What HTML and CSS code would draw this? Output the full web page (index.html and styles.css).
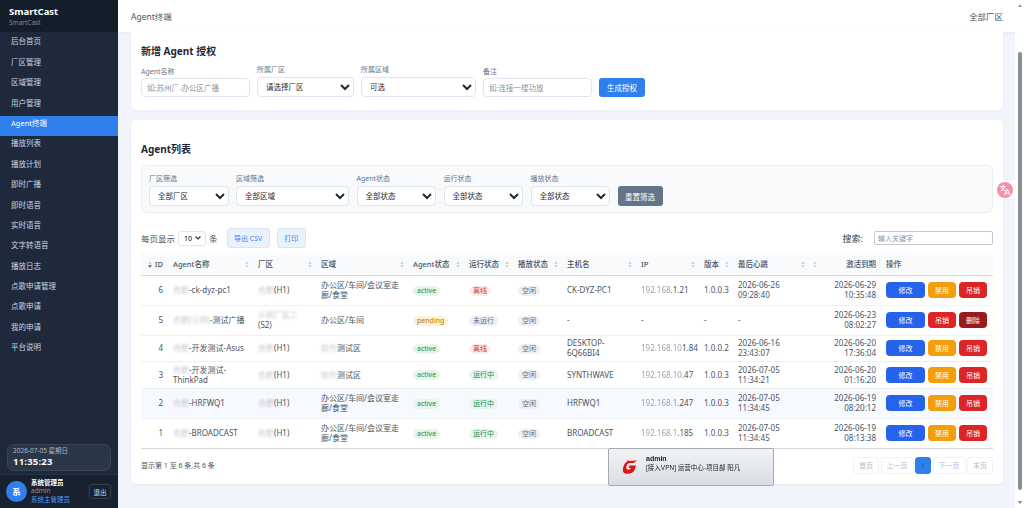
FILE: index.html
```html
<!DOCTYPE html>
<html lang="zh-CN">
<head>
    <meta charset="UTF-8">
    <title>Agent终端</title>
    <link rel="stylesheet" href="styles.css">
</head>
<body>
<div class="app">
    <aside class="sidebar">
        <div class="brand">
            <div class="brand-name">SmartCast</div>
            <div class="brand-sub">SmartCast</div>
        </div>
        <nav class="nav">
            <a class="nav-item">后台首页</a>
            <a class="nav-item">厂区管理</a>
            <a class="nav-item">区域管理</a>
            <a class="nav-item">用户管理</a>
            <a class="nav-item active">Agent终端</a>
            <a class="nav-item">播放列表</a>
            <a class="nav-item">播放计划</a>
            <a class="nav-item">即时广播</a>
            <a class="nav-item">即时语音</a>
            <a class="nav-item">实时语音</a>
            <a class="nav-item">文字转语音</a>
            <a class="nav-item">播放日志</a>
            <a class="nav-item">点歌申请管理</a>
            <a class="nav-item">点歌申请</a>
            <a class="nav-item">我的申请</a>
            <a class="nav-item">平台说明</a>
        </nav>
        <div class="clock">
            <div class="clock-date">2026-07-05 星期日</div>
            <div class="clock-time">11:35:23</div>
        </div>
        <div class="user">
            <div class="avatar">系</div>
            <div class="user-info">
                <div class="user-name">系统管理员</div>
                <div class="user-login">admin</div>
                <div class="user-role">系统主管理员</div>
            </div>
            <button class="logout">退出</button>
        </div>
    </aside>

    <main class="main">
        <header class="topbar">
            <span>Agent终端</span>
            <span>全部厂区</span>
        </header>
        <div class="content">
            <section class="card card-form">
                <h3>新增 Agent 授权</h3>
                <div class="form-row">
                    <label class="field w-name"><span>Agent名称</span><input placeholder="如:苏州厂-办公区广播"></label>
                    <label class="field field-select w-factory"><span>所属厂区</span><select><option>请选择厂区</option></select></label>
                    <label class="field field-select w-area"><span>所属区域</span><select><option>可选</option></select></label>
                    <label class="field w-name"><span>备注</span><input placeholder="如:连接一楼功放"></label>
                    <button class="btn-primary">生成授权</button>
                </div>
            </section>

            <section class="card card-list">
                <h3>Agent列表</h3>
                <div class="filters">
                    <label class="field field-select w-f1"><span>厂区筛选</span><select><option>全部厂区</option></select></label>
                    <label class="field field-select w-f2"><span>区域筛选</span><select><option>全部区域</option></select></label>
                    <label class="field field-select w-f1"><span>Agent状态</span><select><option>全部状态</option></select></label>
                    <label class="field field-select w-f1"><span>运行状态</span><select><option>全部状态</option></select></label>
                    <label class="field field-select w-f1"><span>播放状态</span><select><option>全部状态</option></select></label>
                    <button class="btn-reset">重置筛选</button>
                </div>

                <div class="toolbar">
                    <span>每页显示</span>
                    <select class="page-size"><option>10</option></select>
                    <span class="toolbar-unit">条</span>
                    <button class="btn-light">导出 CSV</button>
                    <button class="btn-light">打印</button>
                    <span class="search-label">搜索:</span>
                    <input class="search" placeholder="输入关键字">
                </div>

                <table class="agents">
                    <colgroup>
                        <col class="c-id"><col class="c-name"><col class="c-factory"><col class="c-area"><col class="c-agent">
                        <col class="c-run"><col class="c-play"><col class="c-host"><col class="c-ip"><col class="c-ver">
                        <col class="c-beat"><col class="c-exp"><col class="c-ops">
                    </colgroup>
                    <thead>
                        <tr>
                            <th class="num sorted">ID</th>
                            <th class="sort">Agent名称</th>
                            <th class="sort">厂区</th>
                            <th class="sort">区域</th>
                            <th class="sort">Agent状态</th>
                            <th class="sort">运行状态</th>
                            <th class="sort">播放状态</th>
                            <th class="sort">主机名</th>
                            <th class="sort">IP</th>
                            <th class="sort">版本</th>
                            <th class="sort">最后心跳</th>
                            <th class="num sort-left">激活到期</th>
                            <th>操作</th>
                        </tr>
                    </thead>
                    <tbody>
                        <tr class="tall">
                            <td class="num">6</td>
                            <td><span class="smudge">合肥</span>-ck-dyz-pc1</td>
                            <td><span class="smudge">合肥</span>(H1)</td>
                            <td>办公区/车间/会议室走廊/食堂</td>
                            <td><span class="badge green">active</span></td>
                            <td><span class="badge red">离线</span></td>
                            <td><span class="badge gray">空闲</span></td>
                            <td>CK-DYZ-PC1</td>
                            <td><span class="smudge-ip">192.168</span>.1.21</td>
                            <td>1.0.0.3</td>
                            <td>2026-06-26 09:28:40</td>
                            <td class="num">2026-06-29 10:35:48</td>
                            <td class="ops"><button class="op blue">修改</button><button class="op orange">禁用</button><button class="op crimson">吊销</button></td>
                        </tr>
                        <tr class="tall">
                            <td class="num">5</td>
                            <td><span class="smudge">合肥(示例)</span>-测试广播</td>
                            <td><span class="smudge">示例厂区二</span>(S2)</td>
                            <td>办公区/车间</td>
                            <td><span class="badge amber">pending</span></td>
                            <td><span class="badge gray">未运行</span></td>
                            <td><span class="badge gray">空闲</span></td>
                            <td>-</td>
                            <td>-</td>
                            <td>-</td>
                            <td>-</td>
                            <td class="num">2026-06-23 08:02:27</td>
                            <td class="ops"><button class="op blue">修改</button><button class="op crimson">吊销</button><button class="op maroon">删除</button></td>
                        </tr>
                        <tr class="short">
                            <td class="num">4</td>
                            <td><span class="smudge">合肥</span>-开发测试-Asus</td>
                            <td><span class="smudge">合肥</span>(H1)</td>
                            <td><span class="smudge">软件</span>测试区</td>
                            <td><span class="badge green">active</span></td>
                            <td><span class="badge red">离线</span></td>
                            <td><span class="badge gray">空闲</span></td>
                            <td>DESKTOP-6Q66BI4</td>
                            <td><span class="smudge-ip">192.168.10</span>1.84</td>
                            <td>1.0.0.2</td>
                            <td>2026-06-16 23:43:07</td>
                            <td class="num">2026-06-20 17:36:04</td>
                            <td class="ops"><button class="op blue">修改</button><button class="op orange">禁用</button><button class="op crimson">吊销</button></td>
                        </tr>
                        <tr class="short">
                            <td class="num">3</td>
                            <td><span class="smudge">合肥</span>-开发测试-ThinkPad</td>
                            <td><span class="smudge">合肥</span>(H1)</td>
                            <td><span class="smudge">软件</span>测试区</td>
                            <td><span class="badge green">active</span></td>
                            <td><span class="badge green">运行中</span></td>
                            <td><span class="badge gray">空闲</span></td>
                            <td>SYNTHWAVE</td>
                            <td><span class="smudge-ip">192.168.10</span>.47</td>
                            <td>1.0.0.3</td>
                            <td>2026-07-05 11:34:21</td>
                            <td class="num">2026-06-20 01:16:20</td>
                            <td class="ops"><button class="op blue">修改</button><button class="op orange">禁用</button><button class="op crimson">吊销</button></td>
                        </tr>
                        <tr class="tall hilite">
                            <td class="num">2</td>
                            <td><span class="smudge">合肥</span>-HRFWQ1</td>
                            <td><span class="smudge">合肥</span>(H1)</td>
                            <td>办公区/车间/会议室走廊/食堂</td>
                            <td><span class="badge green">active</span></td>
                            <td><span class="badge green">运行中</span></td>
                            <td><span class="badge gray">空闲</span></td>
                            <td>HRFWQ1</td>
                            <td><span class="smudge-ip">192.168.1</span>.247</td>
                            <td>1.0.0.3</td>
                            <td>2026-07-05 11:34:45</td>
                            <td class="num">2026-06-19 08:20:12</td>
                            <td class="ops"><button class="op blue">修改</button><button class="op orange">禁用</button><button class="op crimson">吊销</button></td>
                        </tr>
                        <tr class="tall">
                            <td class="num">1</td>
                            <td><span class="smudge">合肥</span>-BROADCAST</td>
                            <td><span class="smudge">合肥</span>(H1)</td>
                            <td>办公区/车间/会议室走廊/食堂</td>
                            <td><span class="badge green">active</span></td>
                            <td><span class="badge green">运行中</span></td>
                            <td><span class="badge gray">空闲</span></td>
                            <td>BROADCAST</td>
                            <td><span class="smudge-ip">192.168.1</span>.185</td>
                            <td>1.0.0.3</td>
                            <td>2026-07-05 11:34:45</td>
                            <td class="num">2026-06-19 08:13:38</td>
                            <td class="ops"><button class="op blue">修改</button><button class="op orange">禁用</button><button class="op crimson">吊销</button></td>
                        </tr>
                    </tbody>
                </table>

                <div class="table-foot">
                    <span>显示第 1 至 6 条,共 6 条</span>
                    <div class="pager">
                        <span class="page">首页</span>
                        <span class="page">上一页</span>
                        <span class="page current">1</span>
                        <span class="page">下一页</span>
                        <span class="page">末页</span>
                    </div>
                </div>
            </section>
        </div>
    </main>

    <div class="scroll-rail">
        <span class="arrow-up"></span>
        <span class="thumb"></span>
        <span class="arrow-down"></span>
    </div>
</div>

<!-- translate widget -->
<div class="translate-tab">
    <svg viewBox="0 0 16 16" width="16" height="16">
        <circle cx="8" cy="8" r="8" fill="#f590ab"/>
        <path d="M3.5 4.5h5M6 3v1.5M4.5 4.5c.4 2 1.6 3.400 3.600 4.200M7.800 4.500C7.300 6.500 6 8 3.800 8.800" fill="none" stroke="#fff" stroke-width="1"/>
        <path d="M7.500 13l2.400-5.400h.6l2.400 5.400M8.500 11.300h3.400" fill="none" stroke="#fff" stroke-width="1.100"/>
    </svg>
</div>

<!-- VPN login notice -->
<div class="vpn-toast">
    <svg class="vpn-logo" viewBox="0 0 20 20" width="16" height="16">
        <path d="M19 1.500 14.500 5H9.500C6.800 5.200 6 7.500 5.400 10c-.4 2 .6 3.300 2.400 3.300 1.600 0 2.800-.7 3.400-2.100H8.400l1-3h8l-1.600 5.300C14.800 16.600 11.300 18.500 6.500 18.500 2.500 18.500.5 16.200 1.200 12.200 2 7.600 3.800 4.500 6.500 3.200L7 1.200l1.800 1.300C12.500 2.200 16 2 19 1.500Z" fill="#e0140f"/>
    </svg>
    <div class="vpn-text">
        <div class="vpn-user">admin</div>
        <div>[接入VPN] 运营中心-项目部 阳凡</div>
    </div>
</div>
</body>
</html>
```

FILE: styles.css
```css
* {
    box-sizing: border-box;
}

html, body {
    height: 100%;
}

body {
    margin: 0;
    font-family: "Noto Sans", "Noto Sans CJK SC", sans-serif;
    font-size: 8px;
    color: #475569;
    background-color: #f1f5fb;
    overflow: hidden;
}

button, input, select {
    font-family: inherit;
}

.app {
    display: flex;
    height: 508px;
}

/* sidebar */
.sidebar {
    width: 118px;
    flex-shrink: 0;
    display: flex;
    flex-direction: column;
    background-color: #1e293b;
    color: #cbd5e1;
}

.brand {
    height: 32px;
    padding: 6px 9px 0;
    background-color: #141e2b;
}

.brand-name {
    font-size: 9.5px;
    line-height: 12px;
    font-weight: 700;
    color: #fff;
}

.brand-sub {
    font-size: 6.5px;
    line-height: 10px;
    color: #7d8897;
}

.nav {
    flex: 1;
    padding-top: 2.4px;
}

.nav-item {
    display: block;
    height: 20.4px;
    padding: 1px 11px 0;
    font-size: 7.5px;
    line-height: 12px;
}

.nav-item.active {
    background-color: #2f80ed;
    color: #fff;
}

.clock {
    height: 27px;
    margin: 0 7px 3px;
    padding: 2px 5px;
    background-color: #2a3748;
    border: 1px solid #384556;
    border-radius: 7px;
}

.clock-date {
    font-size: 6.5px;
    line-height: 8px;
    color: #aeb8c4;
}

.clock-time {
    font-size: 9.5px;
    line-height: 13px;
    font-weight: 700;
    color: #fff;
    letter-spacing: 0.2px;
}

.user {
    height: 34px;
    display: flex;
    align-items: center;
    padding: 0 7px 0 6px;
    background-color: #172130;
    border-top: 1px solid #263243;
}

.avatar {
    width: 21px;
    height: 21px;
    flex-shrink: 0;
    border-radius: 50%;
    background-color: #2f80ed;
    color: #fff;
    font-size: 8.5px;
    font-weight: 700;
    line-height: 21px;
    text-align: center;
}

.user-info {
    flex: 1;
    margin-left: 4px;
    font-size: 6.5px;
    line-height: 8.5px;
}

.user-name {
    font-weight: 700;
    color: #fff;
}

.user-login {
    color: #8a95a3;
}

.user-role {
    color: #4f9bf5;
}

.logout {
    width: 22px;
    height: 15px;
    padding: 0;
    font-size: 6.5px;
    color: #d5dbe3;
    background: transparent;
    border: 1px solid #344050;
    border-radius: 3px;
}

/* main area */
.main {
    flex: 1;
    min-width: 0;
    display: flex;
    flex-direction: column;
}

.topbar {
    height: 32px;
    flex-shrink: 0;
    display: flex;
    justify-content: space-between;
    align-items: center;
    padding: 0 12px 0 13px;
    background-color: #fff;
    font-size: 8.5px;
    color: #4b5563;
    box-shadow: 0 1px 2px rgba(30, 41, 59, 0.06);
}

.content {
    flex: 1;
    padding: 0 12px 0 13px;
}

.card {
    background-color: #fff;
    border-radius: 5px;
    padding: 0 10px;
    box-shadow: 0 1px 3px rgba(30, 41, 59, 0.04);
}

.card h3 {
    margin: 0;
    font-size: 10px;
    line-height: 14px;
    font-weight: 700;
    color: #1f2937;
}

.card-form {
    height: 78px;
    padding-top: 12px;
    border-radius: 0 0 5px 5px;
}

.card-list {
    height: 364px;
    margin-top: 10px;
    padding-top: 22px;
}

.form-row {
    display: flex;
    align-items: flex-end;
    gap: 7px;
    margin-top: 7px;
}

.field {
    display: flex;
    flex-direction: column;
    font-size: 7px;
    line-height: 9px;
    color: #64748b;
}

.field span {
    margin-bottom: 2px;
}

.field-select span {
    margin-bottom: 3px;
}

.field input, .field select {
    width: 100%;
    border: 1px solid #dfe5ee;
    border-radius: 4px;
    background-color: #fff;
    font-size: 7.5px;
    outline: none;
}

.field input {
    height: 19px;
    padding: 0 5px;
}

.field select {
    height: 20px;
    padding: 0 4px;
    color: #1f2937;
}

input::placeholder {
    color: #8a94a3;
}

.w-name { width: 109px; }
.w-factory { width: 97px; }
.w-area { width: 115px; }
.w-f1 { width: 79.5px; }
.w-f2 { width: 113px; }

.btn-primary {
    width: 46px;
    height: 19px;
    padding: 0;
    background-color: #2f80ed;
    color: #fff;
    border: none;
    border-radius: 3px;
    font-size: 7.5px;
}

.filters {
    height: 48px;
    margin-top: 9px;
    padding: 8px 7px 0;
    display: flex;
    align-items: flex-start;
    gap: 7.5px;
    background-color: #f8fafc;
    border: 1px solid #e8edf3;
    border-radius: 6px;
}

.btn-reset {
    width: 45px;
    height: 20px;
    margin-top: 12px;
    padding: 0;
    background-color: #64748b;
    color: #fff;
    border: none;
    border-radius: 3px;
    font-size: 7.5px;
}

.toolbar {
    display: flex;
    align-items: center;
    height: 20px;
    margin-top: 15px;
    font-size: 8.5px;
    color: #475569;
}

.page-size {
    appearance: none;
    width: 28px;
    height: 15px;
    margin: 0 3px;
    padding: 0 0 0 5px;
    font-size: 7px;
    background: #fff url("data:image/svg+xml,%3Csvg xmlns='http://www.w3.org/2000/svg' width='6' height='4'%3E%3Cpath d='M.5.5 3 3 5.500.5' fill='none' stroke='%23333' stroke-width='1.200'/%3E%3C/svg%3E") no-repeat right 4px center;
    border: 1px solid #dfe5ee;
    border-radius: 3px;
}

.toolbar-unit {
    margin-right: 9px;
}

.btn-light {
    height: 20px;
    margin-right: 7px;
    padding: 0 6.5px;
    background-color: #eaf2fd;
    border: 1px solid #d7e5f8;
    border-radius: 3px;
    color: #3b82f6;
    font-size: 7px;
}

.search-label {
    margin-left: auto;
    margin-right: 11px;
    font-size: 9px;
    color: #374151;
}

.search {
    width: 119px;
    height: 14px;
    padding: 0 3px;
    font-size: 7px;
    border: 1px solid #c5c9cf;
    border-radius: 2px;
    outline: none;
}

/* agents table */
.agents {
    width: 852px;
    margin-top: 5px;
    table-layout: fixed;
    border-collapse: collapse;
    font-size: 8px;
    line-height: 10px;
    color: #4b5563;
    border-bottom: 1px solid #d5d9df;
}

.c-id { width: 27px; }
.c-name { width: 85px; }
.c-factory { width: 63px; }
.c-area { width: 92px; }
.c-agent { width: 56px; }
.c-run { width: 49px; }
.c-play { width: 49px; }
.c-host { width: 74px; }
.c-ip { width: 63px; }
.c-ver { width: 34px; }
.c-beat { width: 76px; }
.c-exp { width: 72px; }
.c-ops { width: 112px; }

.agents th {
    position: relative;
    height: 22px;
    padding: 0 5px;
    background-color: #f8fafc;
    border-bottom: 1px solid #d9dde3;
    font-size: 7.5px;
    font-weight: 500;
    text-align: left;
    color: #475569;
}

.agents td {
    padding: 0 5px;
    border-bottom: 1px solid #edf0f4;
}

.agents tr:last-child td {
    border-bottom: none;
}

.tall td { height: 30px; }
.short td { height: 26.5px; }
.hilite td { background-color: #f6f9fe; }

.agents .num {
    text-align: right;
}

/* sort arrows in the header cells */
.sort::before, .sort::after,
.sort-left::before, .sort-left::after,
.sorted::before, .sorted::after {
    content: "";
    position: absolute;
    width: 0;
    height: 0;
    border-left: 2px solid transparent;
    border-right: 2px solid transparent;
}

.sort::before, .sort::after {
    right: 4px;
}

.sort-left::before, .sort-left::after {
    left: 4px;
}

.sorted::before, .sorted::after {
    left: 7px;
}

.agents th::before {
    top: 8px;
    border-bottom: 3px solid #d5dae1;
}

.agents th::after {
    top: 12px;
    border-top: 3px solid #d5dae1;
}

.agents th.sorted::after {
    border-top-color: #64748b;
}

.smudge {
    filter: blur(1px);
    opacity: 0.35;
}

.smudge-ip {
    filter: blur(0.7px);
    opacity: 0.55;
}

.badge {
    display: inline-block;
    padding: 0 4px;
    border-radius: 6px;
    font-size: 7px;
    line-height: 10px;
}

.green { background-color: #e6f6ec; color: #1b8a4b; }
.red { background-color: #fdecec; color: #c93a3a; }
.gray { background-color: #edf0f6; color: #5f6d82; }
.amber { background-color: #fdf2d8; color: #b27a0a; }

.ops {
    white-space: nowrap;
}

.op {
    width: 28px;
    height: 16px;
    margin-right: 3px;
    padding: 0;
    border: none;
    border-radius: 4px;
    font-size: 7px;
    color: #fff;
}

.op.blue { width: 39px; background-color: #2563eb; }
.op.orange { background-color: #f59e0b; }
.op.crimson { background-color: #dc2626; }
.op.maroon { background-color: #991b1b; }

.table-foot {
    display: flex;
    justify-content: space-between;
    align-items: center;
    width: 852px;
    margin-top: 8px;
    font-size: 7px;
    color: #4b5563;
}

.pager {
    display: flex;
    gap: 1.5px;
}

.page {
    height: 17px;
    padding: 0 5px;
    line-height: 15px;
    color: #b6bdc7;
    border: 1px solid #f0f2f5;
    border-radius: 3px;
}

.page.current {
    width: 16px;
    padding: 0;
    text-align: center;
    color: #475569;
    background-color: #2f80ed;
    border-color: #2f80ed;
}

/* fake scrollbar column */
.scroll-rail {
    width: 9px;
    flex-shrink: 0;
    display: flex;
    flex-direction: column;
    align-items: center;
    background-color: #fff;
}

.arrow-up, .arrow-down {
    width: 0;
    height: 0;
    border-left: 2px solid transparent;
    border-right: 2px solid transparent;
}

.arrow-up {
    margin-top: 4px;
    border-bottom: 3px solid #9aa0a6;
}

.arrow-down {
    margin-bottom: 4px;
    border-top: 3px solid #7b7f85;
}

.thumb {
    width: 4px;
    height: 438px;
    margin: 45px 0 auto;
    background-color: #8a8d91;
    border-radius: 2px;
}

/* overlays */
.translate-tab {
    position: fixed;
    left: 996px;
    top: 180px;
    width: 19px;
    height: 19px;
    padding: 1.5px 0 0 0.5px;
    background-color: #fff;
    border-radius: 9px 0 0 9px;
}

.vpn-toast {
    position: fixed;
    left: 608px;
    top: 448px;
    width: 166px;
    height: 38px;
    display: flex;
    align-items: center;
    padding-left: 13px;
    background: linear-gradient(#f2f3f5, #d9dde3);
    border: 1px solid #a5abb3;
    border-radius: 2px;
    font-family: "Liberation Sans", "Noto Sans CJK SC", sans-serif;
    font-size: 6.5px;
    line-height: 9px;
    color: #222;
}

.vpn-logo {
    flex-shrink: 0;
}

.vpn-text {
    margin: -8px 0 0 8px;
}

.vpn-user {
    font-size: 7px;
    font-weight: 700;
}
```
